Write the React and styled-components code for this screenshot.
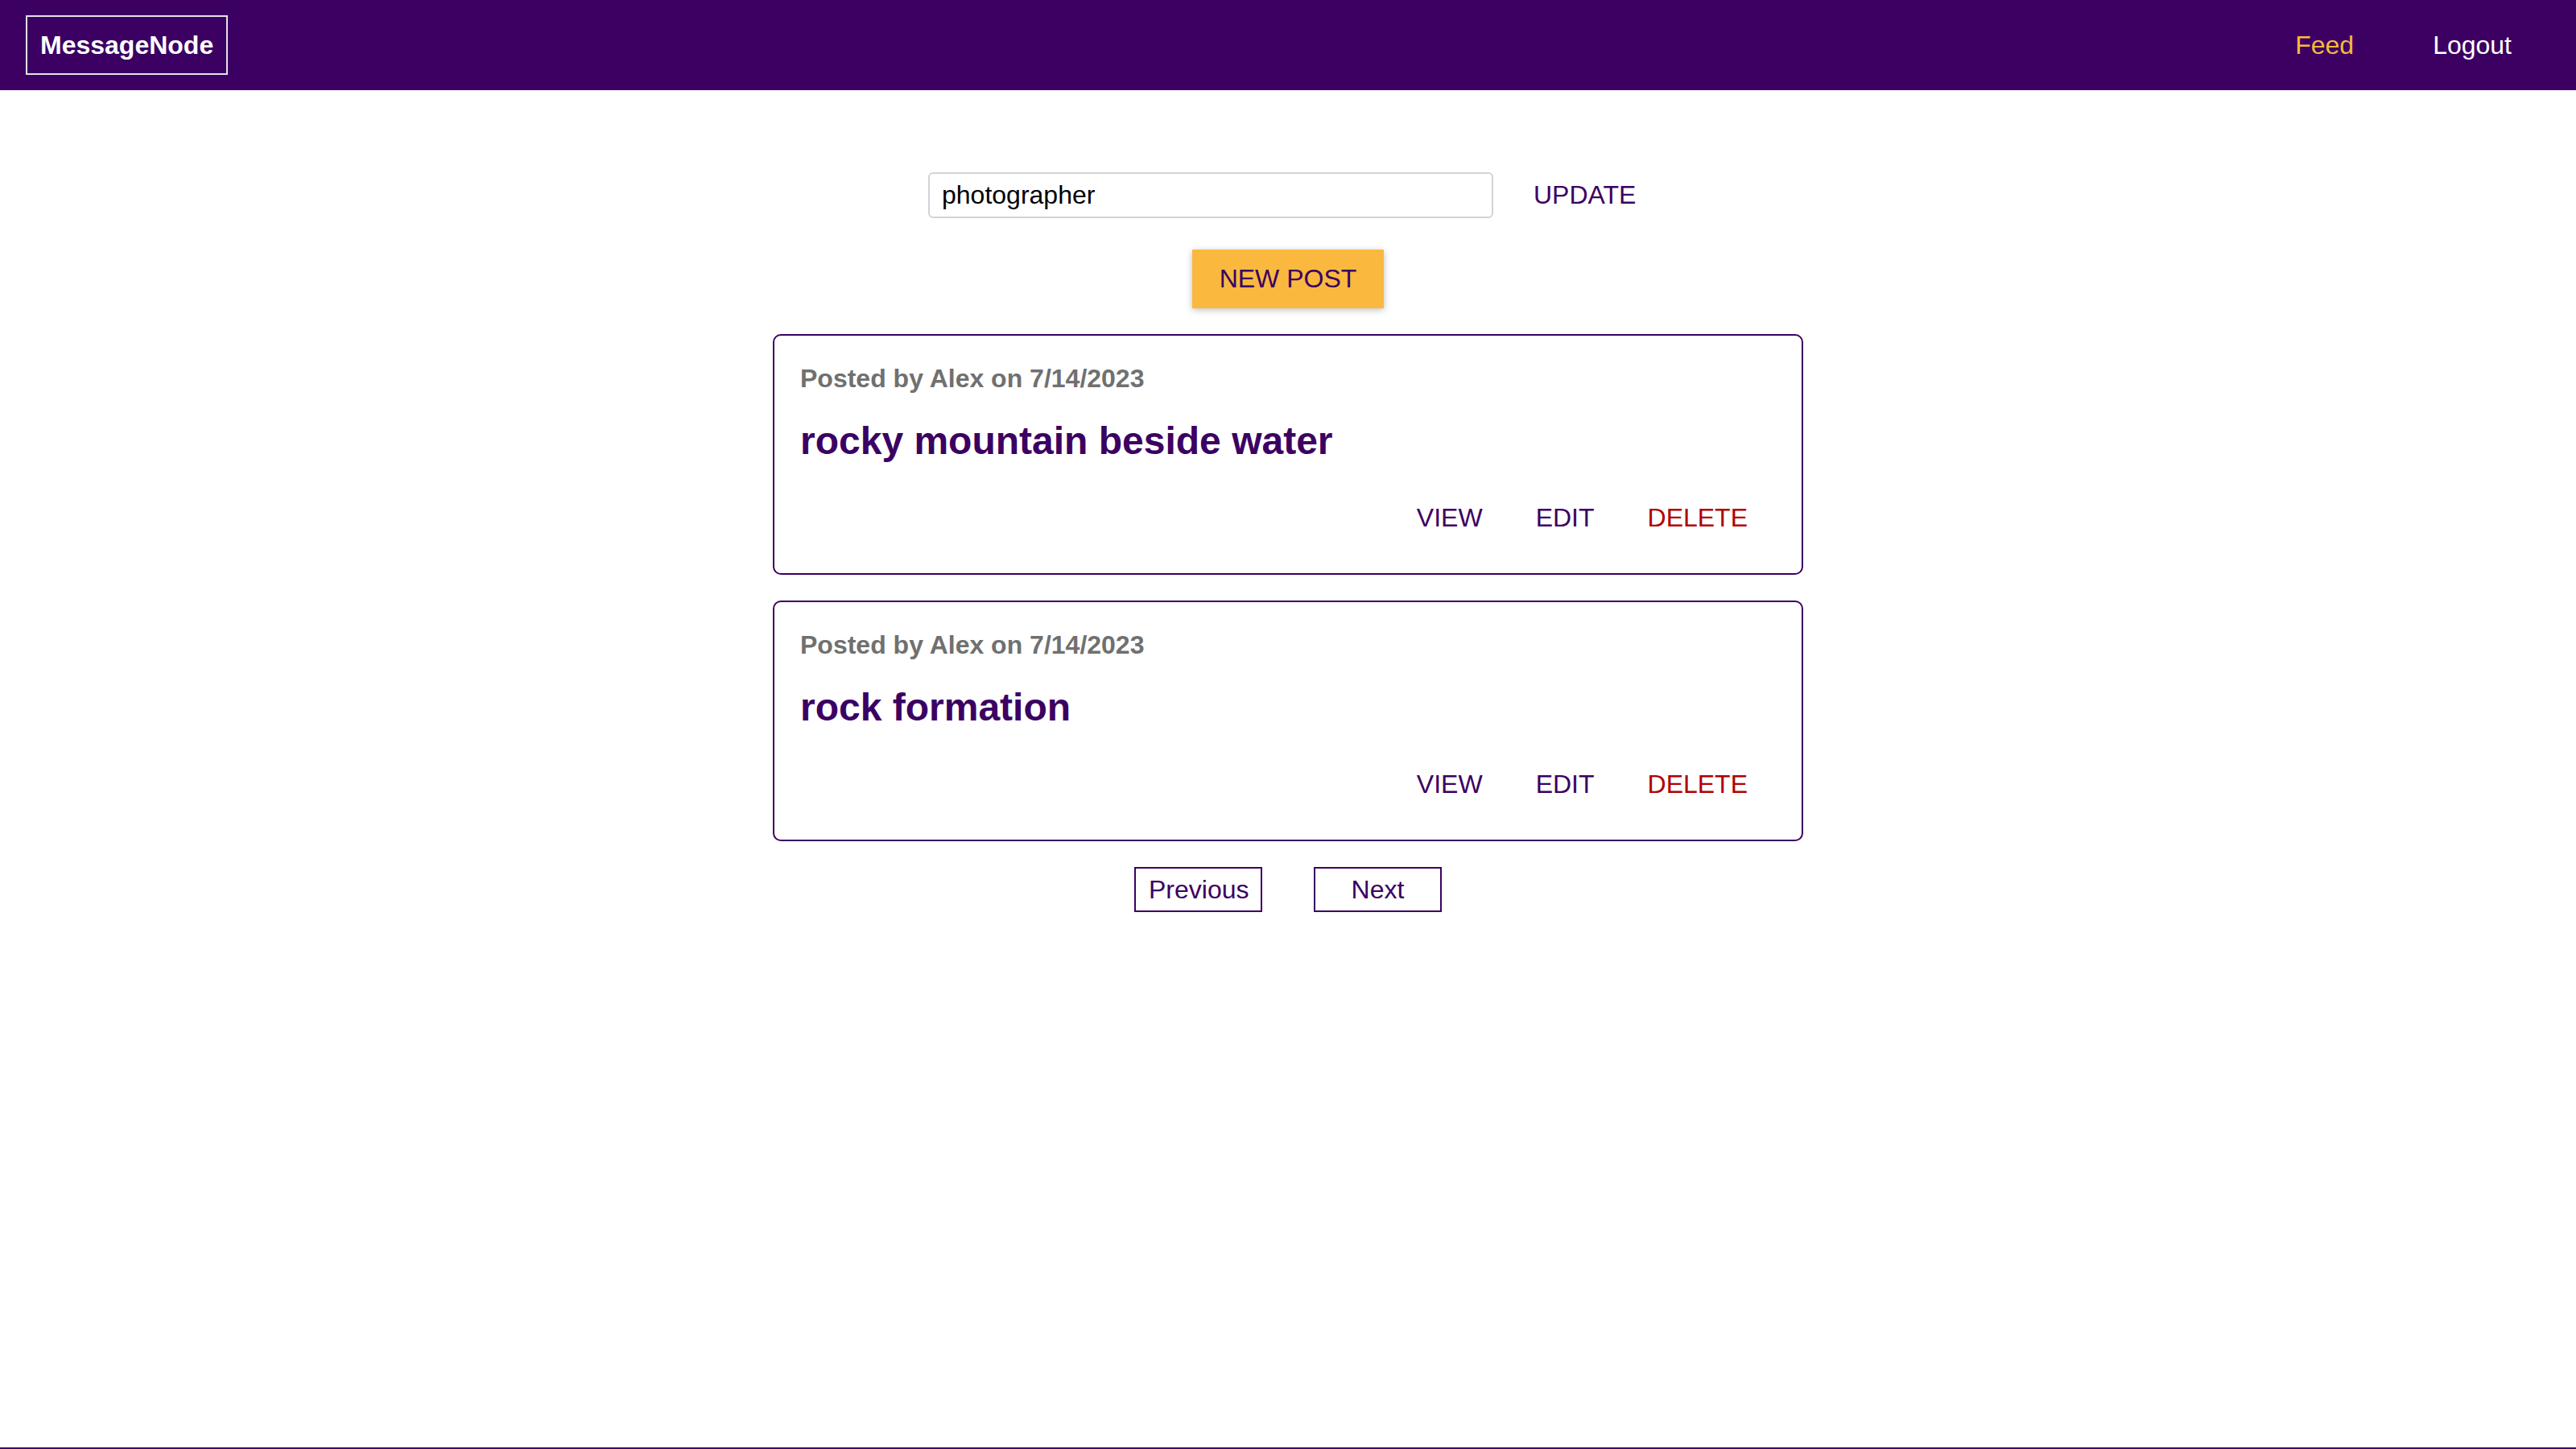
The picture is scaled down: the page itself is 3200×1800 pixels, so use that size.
import React from "react"
import styled, { createGlobalStyle } from "styled-components"

const GlobalStyle = createGlobalStyle`
  html, body {
    margin: 0;
    padding: 0;
    background: #fff;
    font-family: "Liberation Sans", Arial, sans-serif;
  }
  * {
    box-sizing: border-box;
  }
`

const Page = styled.div`
  min-height: 100vh;
  display: flex;
  flex-direction: column;
`

const Header = styled.header`
  height: 112px;
  background: #3b0062;
  display: flex;
  align-items: center;
  justify-content: space-between;
  padding: 0 80px 0 32px;
`

const Logo = styled.div`
  border: 2px solid #e4e0ea;
  padding: 16px 16px;
  color: #fff;
  font-size: 32px;
  line-height: 38px;
  font-weight: bold;
`

const Nav = styled.nav`
  display: flex;
  align-items: center;
  gap: 98px;
`

const NavItem = styled.a`
  font-size: 32px;
  text-decoration: none;
  color: ${(p) => (p.$active ? "#fab83f" : "#fff")};
`

const Main = styled.main`
  flex: 1;
  padding-top: 94px;
`

const StatusForm = styled.form`
  width: 960px;
  margin: 0 auto;
  padding-left: 33px;
  display: flex;
  align-items: center;
`

const Input = styled.input`
  width: 702px;
  height: 57px;
  border: 2px solid #d3d3d3;
  border-radius: 6px;
  padding: 0 15px;
  font: inherit;
  font-size: 32px;
  color: #000;
  outline: none;
`

const FlatButton = styled.button`
  font: inherit;
  font-size: 32px;
  line-height: 37px;
  background: transparent;
  border: 2px solid transparent;
  padding: 16px 31px;
  cursor: pointer;
  color: ${(p) => (p.$danger ? "#b00000" : "#3b0062")};
  margin-left: ${(p) => p.$offset || 0};
`

const Control = styled.section`
  display: flex;
  justify-content: center;
  margin: 31px 0 32px;
`

const RaisedButton = styled.button`
  font: inherit;
  font-size: 32px;
  line-height: 37px;
  background: #fab83f;
  border: 2px solid #fab83f;
  color: #3b0062;
  padding: 16px 32px;
  box-shadow: 0 2px 8px rgba(0, 0, 0, 0.26);
  cursor: pointer;
`

const Card = styled.article`
  width: 1280px;
  margin: 0 auto 32px;
  border: 2px solid #3b0062;
  border-radius: 10px;
  padding: 32px;
`

const Meta = styled.h3`
  margin: 0;
  padding-top: 3px;
  font-size: 32px;
  line-height: 37px;
  color: #707070;
  font-weight: bold;
`

const Title = styled.h1`
  margin: 31px 0 32px;
  font-size: 48px;
  line-height: 55px;
  color: #3b0062;
  font-weight: bold;
`

const Actions = styled.div`
  display: flex;
  justify-content: flex-end;
  padding-right: 2px;
`

const Paginator = styled.div`
  display: flex;
  justify-content: center;
  gap: 64px;
`

const PageButton = styled.button`
  width: 159px;
  font: inherit;
  font-size: 32px;
  line-height: 36px;
  background: #fff;
  color: #3b0062;
  border: 2px solid #3b0062;
  padding: 8px 16px;
  cursor: pointer;
`

const BottomRule = styled.div`
  height: 2px;
  background: #3b0062;
`

const posts = [
  { id: 1, author: "Alex", date: "7/14/2023", title: "rocky mountain beside water" },
  { id: 2, author: "Alex", date: "7/14/2023", title: "rock formation" },
]

function App() {
  return (
    <Page>
      <GlobalStyle />
      <Header>
        <Logo>MessageNode</Logo>
        <Nav>
          <NavItem $active>Feed</NavItem>
          <NavItem>Logout</NavItem>
        </Nav>
      </Header>

      <Main>
        <StatusForm onSubmit={(e) => e.preventDefault()}>
          <Input type="text" defaultValue="photographer" />
          <FlatButton type="submit" $offset="17px">UPDATE</FlatButton>
        </StatusForm>

        <Control>
          <RaisedButton>NEW POST</RaisedButton>
        </Control>

        {posts.map((post) => (
          <Card key={post.id}>
            <Meta>
              Posted by {post.author} on {post.date}
            </Meta>
            <Title>{post.title}</Title>
            <Actions>
              <FlatButton>VIEW</FlatButton>
              <FlatButton>EDIT</FlatButton>
              <FlatButton $danger>DELETE</FlatButton>
            </Actions>
          </Card>
        ))}

        <Paginator>
          <PageButton>Previous</PageButton>
          <PageButton>Next</PageButton>
        </Paginator>
      </Main>

      <BottomRule />
    </Page>
  )
}

export default App
